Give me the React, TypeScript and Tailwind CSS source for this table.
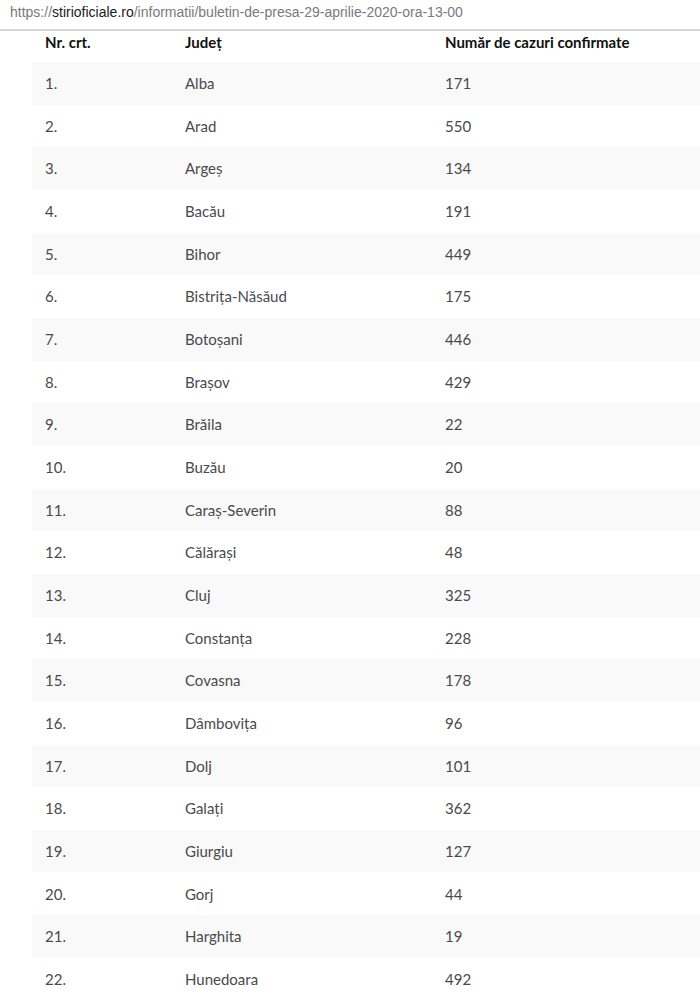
const rows: [string, string][] = [
  ["Alba", "171"],
  ["Arad", "550"],
  ["Argeș", "134"],
  ["Bacău", "191"],
  ["Bihor", "449"],
  ["Bistrița-Năsăud", "175"],
  ["Botoșani", "446"],
  ["Brașov", "429"],
  ["Brăila", "22"],
  ["Buzău", "20"],
  ["Caraș-Severin", "88"],
  ["Călărași", "48"],
  ["Cluj", "325"],
  ["Constanța", "228"],
  ["Covasna", "178"],
  ["Dâmbovița", "96"],
  ["Dolj", "101"],
  ["Galați", "362"],
  ["Giurgiu", "127"],
  ["Gorj", "44"],
  ["Harghita", "19"],
  ["Hunedoara", "492"],
];

export default function App() {
  return (
    <div className="h-[1001px] w-[700px] overflow-hidden bg-white font-['Lato',sans-serif]">
      <div className="flex h-[31px] items-center border-b-2 border-[#d6d6d6] px-[10px] pb-[4px] font-['Liberation_Sans',sans-serif] text-[14px] text-[#7a7a7a]">
        https://<span className="text-[#1a1a1a]">stirioficiale.ro</span>/informatii/buletin-de-presa-29-aprilie-2020-ora-13-00
      </div>
      <div className="pl-[32px]">
        <div className="flex h-[31px] items-start text-[15px] font-bold leading-[22px] text-[#111]">
          <div className="w-[153px] pl-[13px]">Nr. crt.</div>
          <div className="w-[260px]">Județ</div>
          <div>Număr de cazuri confirmate</div>
        </div>
        {rows.map(([name, n], i) => (
          <div
            key={name}
            className={`flex h-[42.67px] items-center text-[15px] text-[#4a4a4a] ${i % 2 === 0 ? "bg-[#f9f9f9]" : ""}`}
          >
            <div className="w-[153px] pl-[13px]">{i + 1}.</div>
            <div className="w-[260px]">{name}</div>
            <div>{n}</div>
          </div>
        ))}
      </div>
    </div>
  );
}
